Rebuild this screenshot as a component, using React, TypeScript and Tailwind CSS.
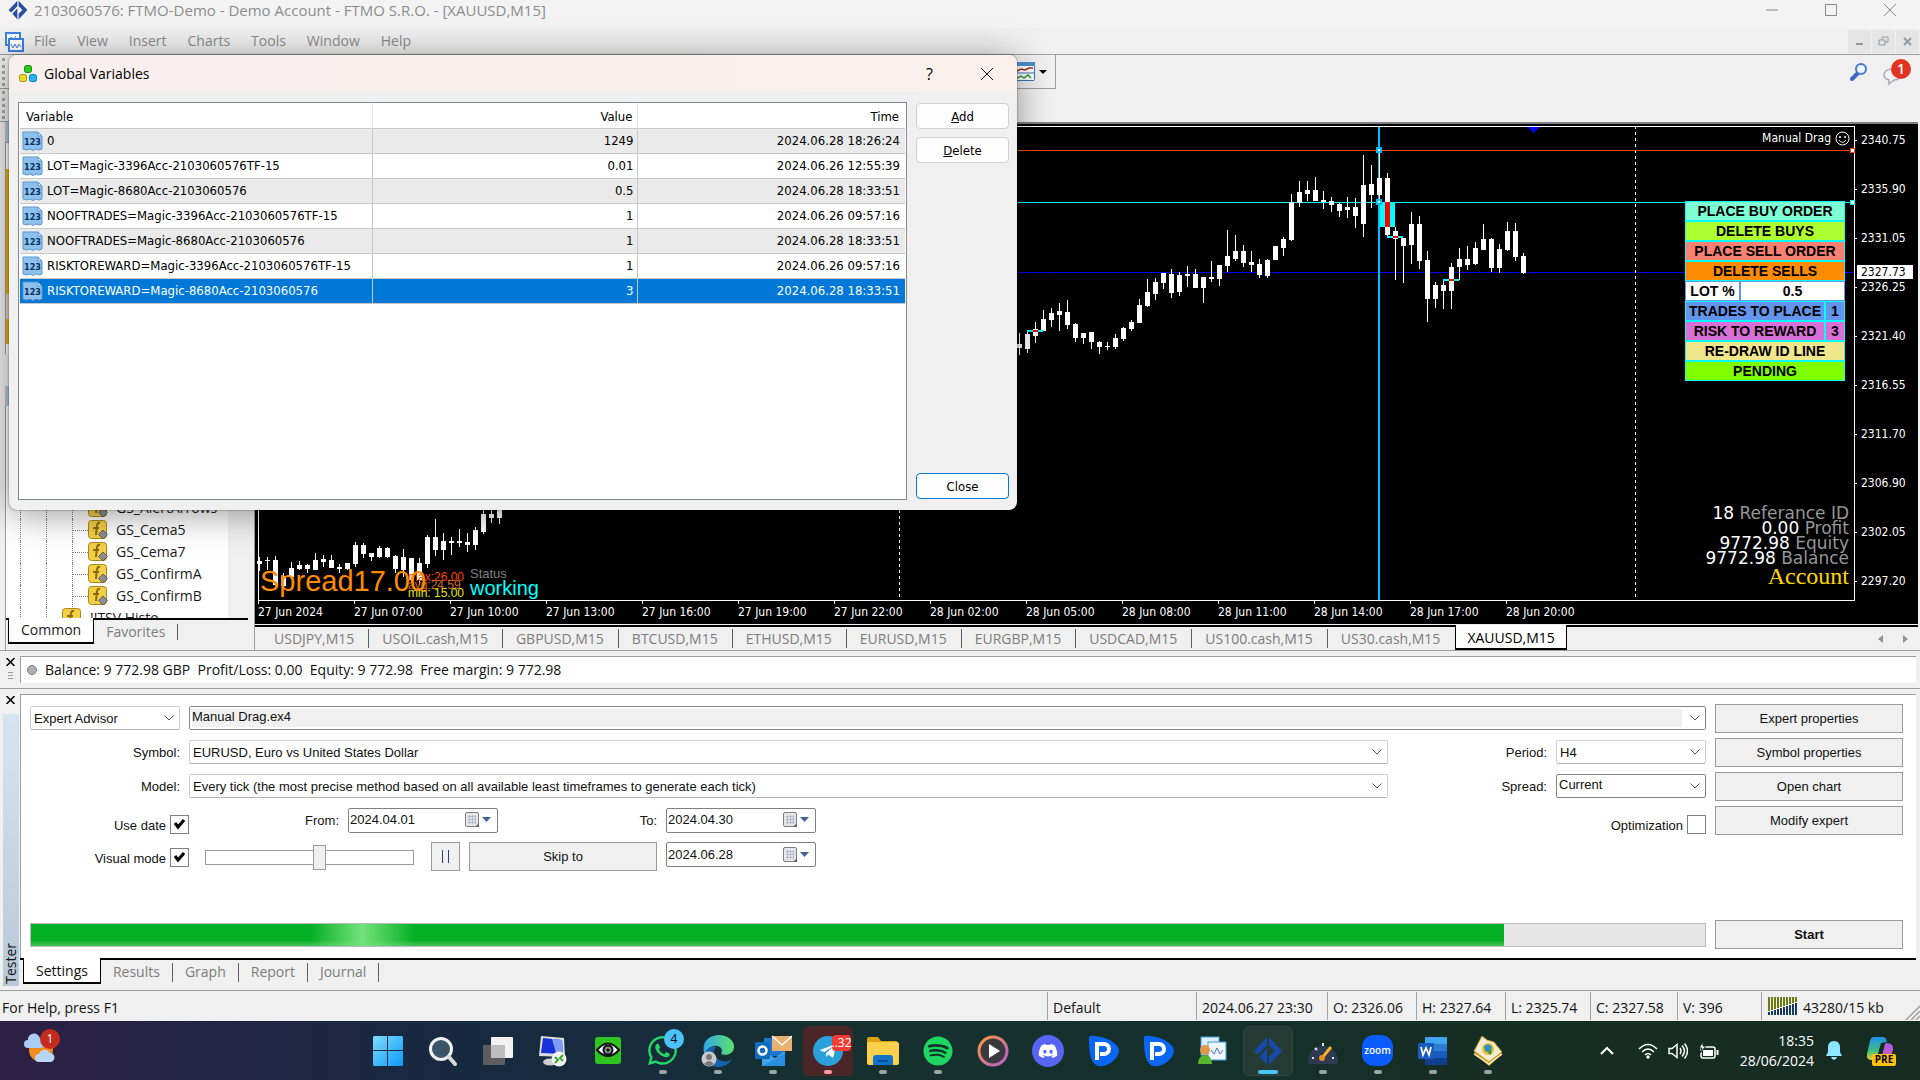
import React from "react";
import { FaWhatsapp, FaSpotify, FaDiscord, FaTelegramPlane } from "react-icons/fa";

const UI = "font-['Open_Sans','Noto_Sans',sans-serif]";
const TAHOMA = "font-['DejaVu_Sans_Condensed','Noto_Sans',sans-serif]";
const ARIAL = "font-['Liberation_Sans',Arial,sans-serif]";

const MENU = ["File", "View", "Insert", "Charts", "Tools", "Window", "Help"];

const VARIABLES = [
  { name: "0", value: "1249", time: "2024.06.28 18:26:24" },
  { name: "LOT=Magic-3396Acc-2103060576TF-15", value: "0.01", time: "2024.06.26 12:55:39" },
  { name: "LOT=Magic-8680Acc-2103060576", value: "0.5", time: "2024.06.28 18:33:51" },
  { name: "NOOFTRADES=Magic-3396Acc-2103060576TF-15", value: "1", time: "2024.06.26 09:57:16" },
  { name: "NOOFTRADES=Magic-8680Acc-2103060576", value: "1", time: "2024.06.28 18:33:51" },
  { name: "RISKTOREWARD=Magic-3396Acc-2103060576TF-15", value: "1", time: "2024.06.26 09:57:16" },
  { name: "RISKTOREWARD=Magic-8680Acc-2103060576", value: "3", time: "2024.06.28 18:33:51", selected: true },
];

const CHART_TABS = [
  "USDJPY,M15", "USOIL.cash,M15", "GBPUSD,M15", "BTCUSD,M15", "ETHUSD,M15", "EURUSD,M15",
  "EURGBP,M15", "USDCAD,M15", "US100.cash,M15", "US30.cash,M15", "XAUUSD,M15",
];

const TIMES = [
  "27 Jun 2024", "27 Jun 07:00", "27 Jun 10:00", "27 Jun 13:00", "27 Jun 16:00", "27 Jun 19:00", "27 Jun 22:00",
  "28 Jun 02:00", "28 Jun 05:00", "28 Jun 08:00", "28 Jun 11:00", "28 Jun 14:00", "28 Jun 17:00", "28 Jun 20:00",
];

const PRICES = [
  "2340.75", "2335.90", "2331.05", "2326.25", "2321.40", "2316.55", "2311.70", "2306.90", "2302.05", "2297.20",
];

// [high, body top, body bottom, low]
type Candle = [number, number, number, number];

const EARLY: Candle[] = [
  [433, 437, 440, 447], [433, 436, 437, 446], [432, 436, 461, 462], [449, 452, 462, 463], [438, 444, 453, 455],
  [437, 441, 445, 446], [440, 441, 445, 449], [429, 436, 446, 446], [431, 435, 438, 443], [431, 436, 444, 444],
  [440, 443, 445, 449], [439, 439, 445, 446], [418, 421, 440, 443], [419, 421, 430, 434], [429, 429, 433, 437],
  [422, 424, 433, 434], [423, 424, 433, 434], [431, 432, 445, 449], [425, 433, 446, 453], [434, 434, 456, 458],
  [434, 439, 456, 461], [411, 413, 440, 444], [395, 413, 426, 432], [409, 417, 426, 436], [413, 417, 419, 431],
  [405, 417, 419, 423], [409, 418, 421, 428], [403, 406, 421, 426], [386, 390, 408, 410], [386, 390, 394, 399],
  [380, 386, 394, 400],
];

const LATE: Candle[] = [
  [209, 220, 224, 231], [207, 210, 225, 229], [198, 205, 212, 219], [186, 195, 207, 207], [184, 189, 196, 203],
  [179, 187, 191, 207], [176, 188, 201, 205], [199, 200, 214, 218], [209, 209, 214, 220], [208, 208, 218, 225],
  [217, 218, 223, 230], [218, 222, 223, 226], [210, 214, 223, 225], [203, 204, 215, 217], [196, 198, 205, 207],
  [175, 181, 199, 199], [155, 168, 182, 183], [154, 158, 170, 176], [149, 149, 159, 165], [145, 150, 169, 174],
  [148, 151, 168, 172], [142, 150, 152, 163], [145, 150, 164, 164], [153, 153, 164, 179], [137, 153, 155, 158],
  [141, 141, 155, 162], [106, 132, 142, 148], [111, 127, 135, 137], [121, 127, 139, 143], [127, 138, 141, 148],
  [135, 140, 151, 154], [135, 136, 152, 154], [122, 122, 136, 136], [113, 115, 124, 132], [70, 78, 116, 117],
  [57, 68, 79, 83], [57, 66, 70, 77], [53, 66, 77, 77], [67, 76, 78, 85], [73, 77, 81, 88],
  [79, 80, 87, 93], [73, 83, 86, 94], [74, 83, 92, 104], [31, 61, 100, 113], [41, 60, 71, 84],
  [26, 54, 71, 79], [49, 54, 111, 112], [103, 107, 115, 156], [114, 114, 122, 159], [88, 100, 121, 140],
  [92, 100, 137, 145], [127, 136, 175, 198], [158, 161, 175, 184], [156, 161, 167, 185], [139, 143, 167, 185],
  [124, 135, 143, 156], [122, 135, 141, 146], [118, 124, 140, 141], [100, 115, 126, 126], [114, 115, 144, 148],
  [120, 125, 144, 149], [98, 107, 126, 127], [99, 107, 133, 137], [129, 132, 149, 150],
];

const QUOTES = ["2024.06.27 23:30", "O: 2326.06", "H: 2327.64", "L: 2325.74", "C: 2327.58", "V: 396"];
const QUOTE_WIDTHS = ["w-[131px]", "w-[89px]", "w-[89px]", "w-[85px]", "w-[87px]", "w-[84px]"];

function Ftmo({ size, color }: { size: number; color: string }) {
  return (
    <svg width={size} height={size} viewBox="0 0 32 32" fill={color}>
      <path d="M15 1v9L5 20l-4-4zM15 13v18l-8-9z" />
      <path d="M17 1l14 15-14 15v-9l6-6-6-6z" />
    </svg>
  );
}

function TitleBar() {
  return (
    <header className="flex h-7 items-center bg-[#f3f3f3] pb-2 pl-2 text-[#8c8c8c]">
      <Ftmo size={20} color="#2b4fa0" />
      <span className="ml-1.5 text-[15px]">2103060576: FTMO-Demo - Demo Account - FTMO S.R.O. - [XAUUSD,M15]</span>
      <div className="ml-auto flex pr-px">
        {["M0 6h12", "M.5.5h11v11H.5z", "M0 0l12 12M12 0L0 12"].map((d, i) => (
          <button key={d} aria-label={["Minimize", "Maximize", "Close"][i]} className="flex w-[59px] items-center justify-center">
            <svg width="12" height="12" fill="none" stroke="#8a8a8a"><path d={d} /></svg>
          </button>
        ))}
      </div>
    </header>
  );
}

function MenuBar() {
  return (
    <nav className="flex h-[27px] items-center border-b border-[#9d9d9d] bg-[#f0f0f0] pl-1 text-sm text-[#8c8c8c]">
      <svg width="21" height="21" viewBox="0 0 21 21" fill="#fff" stroke="#3f7fe0" strokeWidth="2">
        <rect x="2" y="2" width="14" height="12" />
        <path d="M5 8l2-2 2 3 3-4" strokeWidth="1" />
        <rect x="5" y="8" width="14" height="12" />
        <path d="M7 13l2 4 2-4 2 4 2-4 2 3" strokeWidth="1" />
      </svg>
      <div className="ml-[9px] flex gap-[21px]">
        {MENU.map((m) => <button key={m}>{m}</button>)}
      </div>
      <div className="ml-auto flex">
        {["M2 8h7", "M1 4h6v5H1zM4 4V1h6v5H7", "M2 2l7 7M9 2l-7 7"].map((d, i) => (
          <button key={d} aria-label={["Minimize chart", "Restore chart", "Close chart"][i]} className="mr-px flex h-[23px] w-[23px] items-center justify-center bg-[#e5e5e5]">
            <svg width="11" height="11" fill="none" stroke="#8d9bab" strokeWidth={i === 1 ? 1 : 2}><path d={d} /></svg>
          </button>
        ))}
      </div>
    </nav>
  );
}

function Toolbars() {
  return (
    <div className="flex h-[67px] items-start bg-[#f0f0f0]">
      <div className="w-[1056px]">
        <div className="flex h-[34px] items-center gap-1 border-b border-r border-[#9d9d9d] pl-0.5 pr-2">
          <span className="mr-auto h-7 border-l-[3px] border-dotted border-[#a8a8a8]" />
          <svg width="20" height="20" viewBox="0 0 20 20">
            <rect x=".5" y=".5" width="19" height="18" rx="1" fill="#fff" stroke="#3d74b5" />
            <rect width="20" height="4" fill="#4a8fd0" />
            <path d="M2 9l4-2 4 1 4-2h4" stroke="#a03020" fill="none" strokeWidth="1.5" />
            <path d="M1 11h18" stroke="#3d74b5" />
            <path d="M2 16l4-2 3 2 4-3 3 3" stroke="#2e9b3c" fill="none" strokeWidth="1.5" />
          </svg>
          <svg width="8" height="4"><path d="M0 0h8L4 4z" /></svg>
        </div>
        <div className="flex h-[33px] w-60 items-center border-b border-[#9d9d9d] pl-0.5">
          <span className="h-7 border-l-[3px] border-dotted border-[#a8a8a8]" />
        </div>
      </div>
      <div className="ml-auto flex pt-1">
        <button aria-label="Search" className="mr-3.5 self-start pt-1">
          <svg width="18" height="18" viewBox="0 0 18 18" fill="none">
            <path d="M8 10l-6 6" stroke="#3b66c4" strokeWidth="4" strokeLinecap="round" />
            <circle cx="11" cy="6" r="5" stroke="#4a78d0" strokeWidth="2" fill="#eef4ff" />
          </svg>
        </button>
        <button aria-label="1 message" className="mr-2">
          <svg width="30" height="28" viewBox="0 0 30 28">
            <path d="M2 16c0-4 4-6 8-6s8 2 8 6-3 5-6 5l-5 4v-4c-3-1-5-2-5-5z" fill="#f4f4f4" stroke="#a8a8b0" strokeWidth="1.5" />
            <circle cx="19" cy="10" r="10" fill="#e03420" />
            <text x="19" y="15" fill="#fff" fontSize="14" textAnchor="middle" fontWeight="600">1</text>
          </svg>
        </button>
      </div>
    </div>
  );
}

function FxIcon() {
  return (
    <svg width="20" height="20" viewBox="0 0 20 20" className="shrink-0">
      <rect x=".5" y=".5" width="18" height="18" rx="3" fill="#f2cf45" stroke="#a8861c" />
      <path d="M12 3c-4-1-3 4-4 12M5 8h6" stroke="#8a6a10" strokeWidth="2" fill="none" />
      <path d="M15 10l4.5 4.5L15 19l-4.5-4.5z" fill="#8e8e8e" stroke="#5e5e5e" />
    </svg>
  );
}

function LeftDock() {
  return (
    <aside className="flex w-[255px] shrink-0 flex-col border-r border-[#9d9d9d] bg-[#f0f0f0] pl-[5px]">
      <div className="h-5 bg-[#b4c5da]" />
      <div className="h-[212px] border-l border-t border-[#9d9d9d] bg-white pt-[26px]">
        <div className="h-[125px] bg-[#e8b208]" />
        <div className="h-[25px] bg-[#e6cfc0]" />
        <div className="h-[25px] bg-[#e8b208]" />
      </div>
      <div className="h-8" />
      <div className="h-5 bg-[#b4c5da]" />
      <div className="mr-1.5 flex flex-1 flex-col justify-end overflow-hidden border-l border-[#9d9d9d] bg-white text-sm text-[#1a1a1a]">
        <div className="flex">
          <ul className="-mb-[11px] flex-1">
            {["GS_AlertArrows", "GS_Cema5", "GS_Cema7", "GS_ConfirmA", "GS_ConfirmB"].map((n) => (
              <li key={n} className="flex h-[22px] items-center pl-3.5">
                <span className="h-full w-[26px] border-l border-dotted border-[#808080]" />
                <span className="h-full w-[26px] border-l border-dotted border-[#808080]" />
                <span className="relative h-full w-4 border-l border-dotted border-[#808080]">
                  <span className="absolute top-1/2 w-full border-t border-dotted border-[#808080]" />
                </span>
                <FxIcon />
                <span className="ml-2">{n}</span>
              </li>
            ))}
            <li className="flex h-[22px] items-center pl-3.5">
              <span className="h-full w-[26px] border-l border-dotted border-[#808080]" />
              <span className="h-full w-4 border-l border-dotted border-[#808080]" />
              <FxIcon />
              <span className="ml-2">!!TSV Histo</span>
            </li>
          </ul>
          <div className="w-5 bg-[#f0f0f0]" />
        </div>
      </div>
      <div className="mr-1.5 flex h-8 items-start border-l border-[#9d9d9d] text-sm">
        <div className="flex h-[26px] w-full border-t-2 border-black">
          <button className="-mt-0.5 ml-0.5 h-[26px] border-b-2 border-r border-l border-black bg-white px-3 text-[#1a1a1a]">Common</button>
          <button className="px-3 text-[#7c7c7c]">Favorites</button>
          <span className="my-1 w-px bg-[#606060]" />
        </div>
      </div>
    </aside>
  );
}

function Candles({ data, x0 }: { data: Candle[]; x0: number }) {
  return (
    <>
      {data.map(([h, t, b, l], i) => (
        <g key={i} fill="#fff">
          <rect x={x0 + i * 8} y={h} width="1" height={l - h} />
          <rect x={x0 + i * 8 - 2} y={t} width="5" height={b - t} />
        </g>
      ))}
    </>
  );
}

function PlotDrawing() {
  return (
    <svg className="absolute left-0 top-0 h-full w-full" shapeRendering="crispEdges">
      <rect x="0" y="26" width="100%" height="1" fill="#ff4500" />
      <rect x="0" y="78" width="100%" height="1" fill="#00ffff" />
      <rect x="0" y="148" width="100%" height="1" fill="#0000ff" />
      <path d="M644.5 2v474M1380.5 2v474" stroke="#fff" strokeDasharray="3 3" />
      <rect x="1123" y="2" width="2" height="474" fill="#00bfff" />
      <Candles data={EARLY} x0={4} />
      <Candles data={LATE} x0={764} />
      <rect x="1125" y="79" width="15" height="24" fill="#00ffff" />
      <rect x="1130" y="78" width="5" height="25" fill="#ff0000" />
      {[[772, 206], [1132, 112], [1188, 155]].map(([x, y]) => (
        <g key={x}>
          <rect x={x} y={y} width="16" height="2" fill="#00ffff" />
          <rect x={x + 6} y={y} width="5" height="2" fill="#ff0000" />
        </g>
      ))}
      {[[1124, 26], [1124, 78]].map(([x, y]) => (
        <rect key={y} x={x - 2} y={y - 2} width="4" height="4" fill="#fff" stroke="#00bfff" strokeWidth="2" />
      ))}
      <path d="M1272 3h12l-6 6z" fill="#0000ff" />
    </svg>
  );
}

const PANEL = [
  { label: "PLACE BUY ORDER", cls: "bg-[#7fffd4] border-[#00ffff]" },
  { label: "DELETE BUYS", cls: "bg-[#adff2f] border-[#00ffff]" },
  { label: "PLACE SELL ORDER", cls: "bg-[#fa8072] border-[#00ffff]" },
  { label: "DELETE SELLS", cls: "bg-[#ff8c00] border-[#00ffff]" },
  { label: "LOT %", value: "0.5", cls: "bg-white border-[#6495ed]", split: "w-[55px]" },
  { label: "TRADES TO PLACE", value: "1", cls: "bg-[#6495ed] border-[#00ffff]", split: "w-[140px]" },
  { label: "RISK TO REWARD", value: "3", cls: "bg-[#da70d6] border-[#00ffff]", split: "w-[140px]" },
  { label: "RE-DRAW ID LINE", cls: "bg-[#f0e68c] border-[#00ffff]" },
  { label: "PENDING", cls: "bg-[#7fff00] border-[#00ffff]" },
];

function TradePanel() {
  return (
    <div className={`absolute right-2.5 top-[77px] w-40 text-sm font-bold leading-[18px] text-black ${ARIAL}`}>
      {PANEL.map((p) =>
        p.split ? (
          <div key={p.label} className="flex h-5">
            <button className={`${p.split} border whitespace-nowrap ${p.cls}`}>{p.label}</button>
            <button className={`flex-1 border ${p.cls}`}>{p.value}</button>
          </div>
        ) : (
          <button key={p.label} className={`block h-5 w-full border ${p.cls}`}>{p.label}</button>
        )
      )}
    </div>
  );
}

function Chart() {
  return (
    <div className={`flex h-[500px] flex-col bg-black text-xs text-white ${TAHOMA}`}>
      <div className="flex h-[477px]">
        <div className="relative flex-1 overflow-hidden">
          <PlotDrawing />
          <div className="absolute bottom-0 left-[3px] right-0 top-0.5 border border-white" />
          <div className="absolute right-[5px] top-1.5 flex items-center gap-1">
            <span>Manual Drag</span>
            <svg width="15" height="15" viewBox="0 0 15 15" fill="none" stroke="#fff">
              <circle cx="7.5" cy="7.5" r="6.5" />
              <circle cx="5" cy="6" r=".7" />
              <circle cx="10" cy="6" r=".7" />
              <path d="M4 9c2 3 5 3 7 0" />
            </svg>
          </div>
          <span className="absolute right-0 top-6 size-[5px] border border-[#ff4500] bg-white" />
          <span className="absolute right-0 top-[76px] size-[5px] border border-[#00ffff] bg-white" />
          <TradePanel />
          <div className="absolute bottom-[15px] right-1.5 text-right font-['DejaVu_Sans',sans-serif] text-[17px] leading-[15px] text-[#969696]">
            <p><span className="text-white">18</span> Referance ID</p>
            <p><span className="text-white">0.00</span> Profit</p>
            <p><span className="text-white">9772.98</span> Equity</p>
            <p><span className="text-white">9772.98</span> Balance</p>
            <p className="font-['Liberation_Serif',serif] text-2xl leading-5 text-[#ffd700]">Account</p>
          </div>
          <div className={`absolute bottom-1 left-[153px] text-xs leading-2 ${ARIAL}`}>
            <p className="text-[#ff4500]">max:26.00</p>
            <p className="text-[#d2691e]">avg:24.59</p>
            <p className="text-[#e6e600]">min: 15.00</p>
          </div>
          <div className={`absolute bottom-[3px] left-[215px] ${ARIAL}`}>
            <p className="text-[13px] leading-2 text-[#808080]">Status</p>
            <p className="text-xl leading-5 text-[#00ffff]">working</p>
          </div>
          <div className={`absolute bottom-1.5 left-[5px] text-[29px] leading-7 text-[#ff8c00] ${ARIAL}`}>Spread17.00</div>
        </div>
        <div className="relative flex w-[63px] flex-col gap-[33px] pt-2">
          {PRICES.map((p) => (
            <div key={p} className="flex h-4 items-center gap-1">
              <span className="h-px w-0.5 bg-white" />
              {p}
            </div>
          ))}
          <div className="absolute left-0.5 top-[141px] h-[14px] w-14 bg-white pl-1 leading-[14px] text-black">2327.73</div>
        </div>
      </div>
      <div className="flex h-[23px] overflow-hidden pl-[3px]">
        {TIMES.map((t) => (
          <div key={t} className="relative w-24 shrink-0 pt-[3px] whitespace-nowrap">
            <span className="absolute left-0 top-0 h-[3px] w-px bg-white" />
            {t}
          </div>
        ))}
      </div>
    </div>
  );
}

function ChartTabs() {
  return (
    <div className="mt-px flex h-[25px] border-t-2 border-black bg-[#f0f0f0] pl-1.5 text-sm text-[#7c7c7c]">
      {CHART_TABS.map((t, i) =>
        i === CHART_TABS.length - 1 ? (
          <button key={t} className="-mt-0.5 border-b-2 border-l border-r border-black bg-white px-[11px] pt-0.5 text-black">{t}</button>
        ) : (
          <button key={t} className="flex items-center pl-[13px]">
            {t}
            <span className={`ml-3.5 h-[19px] w-px ${i === 9 ? "bg-transparent" : "bg-[#606060]"}`} />
          </button>
        )
      )}
      <div className="ml-auto flex items-center gap-5 pr-2.5">
        <svg width="5" height="8" fill="#909090"><path d="M5 0v8L0 4z" /></svg>
        <svg width="5" height="8" fill="#909090"><path d="M0 0v8l5-4z" /></svg>
      </div>
    </div>
  );
}

function CloseX() {
  return (
    <button aria-label="Close panel" className="block">
      <svg width="9" height="8" stroke="#000" strokeWidth="1.5"><path d="M.5 0l8 8M8.5 0l-8 8" /></svg>
    </button>
  );
}

function Terminal() {
  return (
    <section className="flex h-[38px] border-b border-[#9d9d9d] pt-[5px]">
      <div className="flex w-5 flex-col items-center gap-1.5 pt-0.5">
        <CloseX />
        <svg width="5" height="9" stroke="#9a9a9a"><path d="M0 .5h5M0 3.5h5M0 6.5h5" /></svg>
      </div>
      <div className="mr-1 flex h-[27px] flex-1 items-center border-l border-t border-[#9d9d9d] bg-white pl-1.5 text-sm text-[#111]">
        <svg width="10" height="10"><circle cx="5" cy="5" r="4.5" fill="#b0b0b0" stroke="#808080" /></svg>
        <span className="ml-2 whitespace-pre">Balance: 9 772.98 GBP  Profit/Loss: 0.00  Equity: 9 772.98  Free margin: 9 772.98</span>
      </div>
    </section>
  );
}

type ComboProps = { id: string; value: string; className: string; label?: string; strong?: boolean; filled?: boolean };

function Combo({ id, value, className, label, strong, filled }: ComboProps) {
  return (
    <div className={`relative h-6 border bg-white ${className} ${strong ? "rounded-xs border-[#868686]" : "rounded-xs border-[#d0d0d0] border-b-[#b5b5b5] bg-[#fdfdfd]"}`}>
      <select
        id={id}
        aria-label={label}
        defaultValue={value}
        className={`block h-full w-full appearance-none leading-4 outline-none ${filled ? "border-2 border-r-[23px] border-white bg-[#f0f0f0] pb-0.5" : strong ? "pb-0.5 pl-0.5" : "pl-[3px] pt-px"}`}
      >
        <option>{value}</option>
      </select>
      <svg className="pointer-events-none absolute right-[5px] top-2" width="10" height="6" fill="none" stroke="#505050"><path d="M.5.5L5 5l4.5-4.5" /></svg>
    </div>
  );
}

function DateBox({ id, value, label }: { id: string; value: string; label?: string }) {
  return (
    <div className="flex h-[25px] w-[150px] items-center rounded-xs border border-[#808080] bg-white pr-1.5">
      <input id={id} aria-label={label} defaultValue={value} className="w-0 flex-1 pl-px outline-none" />
      <button aria-label="Open calendar" className="flex items-center gap-0.5">
        <svg width="15" height="16" viewBox="0 0 15 16">
          <rect x=".5" y=".5" width="13" height="14" rx="1.5" fill="#e6e6ea" stroke="#857d7d" />
          <path d="M3 4.5h8M3 7.5h8M3 10.5h8M4.5 3v9M7.5 3v9M10.5 3v9" stroke="#b3bccb" />
          <path d="M10 15l4-4v4z" fill="#6b6464" />
        </svg>
        <svg width="9" height="6" fill="#44639a"><path d="M0 0h9L4.5 5z" /></svg>
      </button>
    </div>
  );
}

function Check({ id, label, on }: { id: string; label: string; on?: boolean }) {
  return (
    <div className="flex items-center gap-1 pt-1">
      <label htmlFor={id} className="pt-[3px]">{label}</label>
      <div className="relative size-[19px]">
        <input id={id} type="checkbox" defaultChecked={on} className="peer block size-[19px] appearance-none border border-[#808080] bg-white" />
        <svg className="pointer-events-none absolute left-1 top-1 hidden peer-checked:block" width="11" height="11" fill="none" stroke="#000" strokeWidth="3"><path d="M1 4l3 4 6-7" /></svg>
      </div>
    </div>
  );
}

const BTN = "h-[29px] border border-[#9a9a9a] bg-[#f0f0f0]";

function Tester() {
  return (
    <section className="flex flex-1 bg-[#f0f0f0] pt-[5px]">
      <div className="flex w-5 flex-col items-center">
        <div className="pb-2 pt-0.5"><CloseX /></div>
        <div className="mb-1 ml-[3px] mt-0.5 flex w-4 flex-1 items-end self-start bg-gradient-to-b from-[#d6e4f3] to-[#b9c7d8] pb-0.5">
          <span className="rotate-180 text-sm leading-4 text-[#111] [writing-mode:vertical-rl]">Tester</span>
        </div>
      </div>
      <div className="mr-1 flex flex-1 flex-col">
        <div className={`flex flex-1 flex-col border-l border-t border-[#9d9d9d] bg-white pb-[9px] pl-[9px] pr-[13px] pt-1.5 text-[13px] text-[#111] ${ARIAL}`}>
          <div className="flex gap-[9px]">
            <div className="flex-1 *:h-[34px]">
              <div className="flex items-center gap-[9px]">
                <Combo id="kind" label="Program type" value="Expert Advisor" className="w-[150px]" />
                <Combo id="expert" label="Expert" value="Manual Drag.ex4" className="flex-1" strong filled />
              </div>
              <div className="flex items-center gap-[9px]">
                <label htmlFor="symbol" className="w-[150px] pt-0.5 text-right">Symbol:</label>
                <Combo id="symbol" value="EURUSD, Euro vs United States Dollar" className="flex-1" />
                <label htmlFor="period" className="w-[150px] pt-0.5 text-right">Period:</label>
                <Combo id="period" value="H4" className="w-[150px]" />
              </div>
              <div className="flex items-center gap-[9px]">
                <label htmlFor="model" className="w-[150px] pt-0.5 text-right">Model:</label>
                <Combo id="model" value="Every tick (the most precise method based on all available least timeframes to generate each tick)" className="flex-1" />
                <label htmlFor="spread" className="w-[150px] pt-0.5 text-right">Spread:</label>
                <Combo id="spread" value="Current" className="w-[150px]" strong />
              </div>
              <div className="flex items-center">
                <div className="flex w-[159px] justify-end pt-1"><Check id="usedate" label="Use date" on /></div>
                <label htmlFor="from" className="mr-[9px] w-[150px] pt-0.5 text-right">From:</label>
                <DateBox id="from" value="2024.04.01" />
                <label htmlFor="to" className="mr-[9px] w-[159px] pt-0.5 text-right">To:</label>
                <DateBox id="to" value="2024.04.30" />
                <div className="ml-auto pt-1"><Check id="optimization" label="Optimization" /></div>
              </div>
              <div className="flex items-start pt-[5px]">
                <div className="flex w-[159px] justify-end"><Check id="visual" label="Visual mode" on /></div>
                <input
                  type="range"
                  aria-label="Visual speed"
                  defaultValue={55}
                  className="ml-4 mr-[17px] mt-2 h-[15px] w-[209px] appearance-none border border-[#9a9a9a] bg-white [&::-webkit-slider-thumb]:h-[25px] [&::-webkit-slider-thumb]:w-[13px] [&::-webkit-slider-thumb]:appearance-none [&::-webkit-slider-thumb]:border [&::-webkit-slider-thumb]:border-[#9a9a9a] [&::-webkit-slider-thumb]:bg-[#f0f0f0]"
                />
                <button aria-label="Pause" className={`${BTN} mr-[9px] flex w-[29px] items-center justify-center`}>
                  <svg width="9" height="13" stroke="#2d3a8c"><path d="M1.5 0v13M7.5 0v13" /></svg>
                </button>
                <button className={`${BTN} mr-[9px] w-[188px]`}>Skip to</button>
                <DateBox id="skip" label="Skip to date" value="2024.06.28" />
              </div>
            </div>
            <div className="flex w-[188px] flex-col gap-[5px] pt-[3px]">
              {["Expert properties", "Symbol properties", "Open chart", "Modify expert"].map((b) => (
                <button key={b} className={BTN}>{b}</button>
              ))}
            </div>
          </div>
          <div className="mt-auto flex items-center gap-[9px]">
            <div className="h-6 flex-1 border border-[#bcbcbc] bg-[#e6e6e6]">
              <div className="flex h-full w-[88%] items-stretch bg-gradient-to-b from-[#06b025] from-75% to-[#3cc455]">
                <div className="ml-[19%] w-[7%] bg-gradient-to-r from-transparent via-[#74e27c] to-transparent" />
              </div>
            </div>
            <button className={`${BTN} w-[188px] font-bold`}>Start</button>
          </div>
        </div>
        <div className="mb-1.5 flex h-[26px] border-t-2 border-black text-sm text-[#7c7c7c]">
          <button className="-mt-0.5 ml-[3px] border-b-2 border-l border-r border-black bg-white px-3 pt-0.5 text-[#111]">Settings</button>
          {["Results", "Graph", "Report", "Journal"].map((t) => (
            <button key={t} className="flex items-center pl-3">
              {t}
              <span className="ml-3 h-[19px] w-px bg-[#606060]" />
            </button>
          ))}
        </div>
      </div>
    </section>
  );
}

function StatusBar() {
  return (
    <footer className="flex h-[31px] items-center border-t border-[#9d9d9d] bg-[#f0f0f0] text-sm text-[#111] *:h-7 *:pt-[3px]">
      <div className="flex flex-1 items-center pl-0.5">For Help, press F1</div>
      <div className="flex w-[149px] items-center border-l border-[#a0a0a0] pl-[5px]">Default</div>
      {QUOTES.map((q, i) => (
        <div key={q} className={`${QUOTE_WIDTHS[i]} flex items-center border-l border-[#a0a0a0] pl-[5px]`}>{q}</div>
      ))}
      <div className="flex w-[159px] items-center gap-1 border-l border-[#a0a0a0] pl-[5px]">
        <svg width="32" height="22">
          {Array.from({ length: 10 }, (_, i) => (
            <g key={i}>
              <rect x={i * 3 + 1} y="0" width="2" height={14 - i} fill="#6b7a12" />
              <rect x={i * 3 + 1} y={15 - i} width="2" height={3 + i} fill="#173a5e" />
            </g>
          ))}
        </svg>
        <span>43280/15 kb</span>
        <svg width="15" height="15" className="ml-auto self-end" stroke="#a0a0a0" strokeWidth="1.5"><path d="M1 15L15 1M6 15l9-9M11 15l4-4" /></svg>
      </div>
    </footer>
  );
}

function Bubble({ text, cls }: { text: string; cls: string }) {
  return <span className={`absolute flex items-center justify-center text-xs ${cls}`}>{text}</span>;
}

const PuP = (
  <svg width="32" height="32" viewBox="0 0 32 32">
    <path d="M2 4C1 1 4 0 8 1c8 1 16 3 22 10 3 4 2 8-1 12-5 6-12 9-17 8C4 30 2 18 2 4z" fill="#0a66f5" />
    <path d="M10 25V9h7a5 5 0 010 10h-4" fill="none" stroke="#fff" strokeWidth="4" />
  </svg>
);

const APPS: { name: string; icon: React.ReactNode; dot?: string; box?: string }[] = [
  {
    name: "Start",
    icon: (
      <svg width="30" height="30" viewBox="0 0 30 30">
        <defs><linearGradient id="win" x1="0" y1="0" x2="1" y2="1"><stop stopColor="#7fdcff" /><stop offset="1" stopColor="#0a9bfa" /></linearGradient></defs>
        <path d="M1 0h13v14H0V1zM15 0h14l1 1v13H15zM0 15h14v15H1l-1-1zM15 15h15v14l-1 1H15z" fill="url(#win)" />
      </svg>
    ),
  },
  {
    name: "Search",
    icon: (
      <svg width="28" height="30" viewBox="0 0 28 30">
        <circle cx="12" cy="13" r="10.5" fill="#3c5566" stroke="#f0f0f0" strokeWidth="3" />
        <path d="M20 21l6 7" stroke="#d8d8d8" strokeWidth="4" strokeLinecap="round" />
      </svg>
    ),
  },
  {
    name: "Task view",
    icon: (
      <svg width="30" height="30" viewBox="0 0 30 30">
        <rect x="8" y="1" width="22" height="21" rx="1" fill="#f2f2f2" />
        <rect x="0" y="9" width="22" height="20" rx="1" fill="#5e5e5e" />
        <rect x="8" y="9" width="14" height="13" fill="#bdbdbd" />
      </svg>
    ),
  },
  {
    name: "Remote Desktop",
    icon: (
      <svg width="30" height="32" viewBox="0 0 30 32">
        <path d="M3 1l23 2 1 19L1 21z" fill="#dcdcdc" />
        <path d="M5 3l19 2 1 14L3 18z" fill="#1733d8" />
        <path d="M14 4l10 1 1 14-7-1z" fill="#7f9cf5" />
        <ellipse cx="12" cy="27" rx="7" ry="3.5" fill="#d0d0d0" />
        <circle cx="21" cy="24" r="7.5" fill="#f2f2f2" />
        <path d="M17 22l3 3-3 3M25 20l-3 3 3 3" stroke="#3aa828" strokeWidth="2" fill="none" />
      </svg>
    ),
  },
  {
    name: "Eye",
    icon: (
      <svg width="26" height="28" viewBox="0 0 26 28">
        <rect width="26" height="27" rx="3" fill="#2fc41f" />
        <path d="M2 13q11-13 22 0-11 12-22 0z" fill="#fff" stroke="#111" strokeWidth="2" />
        <circle cx="13" cy="13" r="4.5" fill="#888" stroke="#111" strokeWidth="2" />
        <circle cx="13" cy="13" r="1.5" />
      </svg>
    ),
  },
  {
    name: "WhatsApp",
    dot: "w-2 bg-[#9aa5a5]",
    icon: (
      <>
        <FaWhatsapp size={33} color="#25d366" />
        <Bubble text="4" cls="right-1.5 top-2 size-5 rounded-full bg-[#4cc2ff] text-black text-sm" />
      </>
    ),
  },
  {
    name: "Edge",
    dot: "w-2 bg-[#9aa5a5]",
    icon: (
      <svg width="34" height="32" viewBox="0 0 34 32">
        <defs><linearGradient id="edge"><stop stopColor="#2ea8e8" /><stop offset="1" stopColor="#5fe06a" /></linearGradient></defs>
        <path d="M4 20C-1 8 8 0 18 0c9 0 16 6 15 13-1 6-7 8-13 6 3-4-1-9-7-8-5 1-8 5-9 9z" fill="url(#edge)" />
        <path d="M4 20c1-7 6-10 11-8-4 4-2 12 6 14 4 1 8 0 10-2-3 6-9 8-14 8C9 32 4 26 4 20z" fill="#1562ab" />
        <circle cx="8" cy="24" r="7.5" fill="#c9c9c9" />
        <circle cx="8" cy="22" r="3" fill="#777" />
        <path d="M3 29q5-6 10 0-5 4-10 0z" fill="#777" />
      </svg>
    ),
  },
  {
    name: "Outlook",
    dot: "w-2 bg-[#9aa5a5]",
    icon: (
      <svg width="38" height="32" viewBox="0 0 38 32">
        <path d="M10 3h20v18H10z" fill="#1a76d2" />
        <path d="M8 15l13 8 10-7v15H8z" fill="#41a5ee" />
        <path d="M8 31l23-13v13z" fill="#2b8fe0" />
        <rect x="1" y="7" width="15" height="17" rx="1" fill="#0f6cbd" />
        <circle cx="8.5" cy="15.5" r="4" fill="none" stroke="#fff" strokeWidth="2.5" />
        <rect x="18" y="1" width="20" height="15" fill="#e9b072" />
        <path d="M18 1l10 9L38 1" stroke="#fff" strokeWidth="1.5" fill="none" />
      </svg>
    ),
  },
  {
    name: "Telegram",
    dot: "w-2 bg-[#ff99a4]",
    box: "bg-[#4a2629]",
    icon: (
      <>
        <span className="flex size-[30px] items-center justify-center rounded-full bg-[#2aa1da]"><FaTelegramPlane size={18} color="#fff" /></span>
        <Bubble text="..32" cls="right-1 top-3.5 h-4 w-[19px] rounded bg-[#f23c34] text-white" />
      </>
    ),
  },
  {
    name: "File Explorer",
    dot: "w-2 bg-[#9aa5a5]",
    icon: (
      <svg width="32" height="30" viewBox="0 0 32 30">
        <path d="M0 3q0-2 2-2h9l3 4h16v8H0z" fill="#e0a20c" />
        <rect y="6" width="32" height="23" rx="2" fill="#ffd04c" />
        <path d="M6 29v-7q0-3 3-3h14q3 0 3 3v7z" fill="#1173c9" />
        <path d="M11 25h10" stroke="#0a4b8c" strokeWidth="2" />
      </svg>
    ),
  },
  { name: "Spotify", dot: "w-2 bg-[#9aa5a5]", icon: <FaSpotify size={30} color="#1ed760" /> },
  {
    name: "Media Player",
    icon: (
      <svg width="32" height="32" viewBox="0 0 32 32">
        <defs><linearGradient id="mp" x1="0" y1="0" x2="1" y2="1"><stop stopColor="#ff9a3c" /><stop offset="1" stopColor="#b35ad0" /></linearGradient></defs>
        <circle cx="16" cy="16" r="14" fill="#3a3a3e" stroke="url(#mp)" strokeWidth="3" />
        <path d="M12 9l11 7-11 7z" fill="#fff" />
      </svg>
    ),
  },
  { name: "Discord", icon: <span className="flex size-8 items-center justify-center rounded-full bg-[#5865f2]"><FaDiscord size={20} color="#fff" /></span> },
  { name: "Prop app", icon: PuP },
  { name: "Prop app 2", icon: PuP },
  {
    name: "Contacts",
    icon: (
      <svg width="30" height="30" viewBox="0 0 30 30">
        <rect x="3" y="1" width="18" height="18" fill="#dceefc" stroke="#3aa0d8" />
        <rect x="10" y="6" width="18" height="18" fill="#eef6fd" stroke="#3aa0d8" />
        <path d="M13 14l3 4 3-6 3 6 3-4" stroke="#4a78b8" fill="none" />
        <circle cx="7" cy="14" r="5" fill="#e09a4a" />
        <path d="M0 28c0-12 14-12 14 0z" fill="#58b52c" />
      </svg>
    ),
  },
  { name: "FTMO MetaTrader", dot: "w-5 bg-[#4cc2ff]", box: "bg-[#263b33] border border-[#30453d]", icon: <Ftmo size={30} color="#1848a8" /> },
  {
    name: "Speed test",
    dot: "w-2 bg-[#9aa5a5]",
    icon: (
      <svg width="32" height="28" viewBox="0 0 32 28">
        <path d="M1 24a15 15 0 1130 0q0 3-3 3H4q-3 0-3-3z" fill="#2d3a52" />
        <path d="M5 21h2M8 11l2 2M16 6v3M25 21h2" stroke="#dfe6ee" strokeWidth="2" />
        <path d="M15 21l9-11" stroke="#f5b32a" strokeWidth="3" />
        <circle cx="15" cy="21" r="3" fill="#f08c1e" />
      </svg>
    ),
  },
  {
    name: "Zoom",
    dot: "w-2 bg-[#9aa5a5]",
    icon: <span className="flex size-[31px] items-center justify-center rounded-xl bg-[#0b5cff] text-[10px] font-semibold text-white">zoom</span>,
  },
  {
    name: "Word",
    dot: "w-2 bg-[#9aa5a5]",
    icon: (
      <svg width="30" height="30" viewBox="0 0 30 30">
        <path d="M7 1h22v8H7z" fill="#41a5ee" />
        <path d="M7 8h22v8H7z" fill="#2b7cd3" />
        <path d="M7 15h22v7H7z" fill="#185abd" />
        <path d="M7 22h22v7H7z" fill="#103f91" />
        <rect y="7" width="16" height="16" rx="1" fill="#185abd" />
        <path d="M3 11l2 8 3-7 3 7 2-8" stroke="#fff" strokeWidth="1.8" fill="none" />
      </svg>
    ),
  },
  {
    name: "MetaEditor",
    dot: "w-2 bg-[#9aa5a5]",
    icon: (
      <svg width="30" height="30" viewBox="0 0 30 30">
        <path d="M1 17L12 3l17 14-13 13z" fill="#d8a41c" />
        <path d="M1 15L9 0l5 4 7 2 8 10-13 10z" fill="#f4ecd0" stroke="#b8902c" />
        <path d="M1 18l15 10 13-10" stroke="#fff3c0" strokeWidth="1.5" fill="none" />
        <circle cx="15" cy="13" r="6" fill="#e8c22e" />
        <path d="M11 10q5-4 8 1l-3 6-4-2z" fill="#2f8fc0" />
        <path d="M15 17l4-5-1 7z" fill="#3a9b3c" />
      </svg>
    ),
  },
];

function Taskbar() {
  return (
    <div className="flex h-[59px] items-stretch bg-[linear-gradient(90deg,#2d1f45_0%,#1f2542_14%,#17293f_24%,#162c3c_34%,#15302f_42%,#15302b_65%,#162d22_80%,#162c22_100%)] text-white">
      <div className="w-[360px] shrink-0">
        <button aria-label="Weather" className="relative ml-6 mt-2">
          <svg width="34" height="36" viewBox="0 0 34 36">
            <circle cx="17" cy="21" r="12" fill="#f28a1e" />
            <path d="M4 19a4 4 0 010-8 6 6 0 0112-1 4.5 4.5 0 010 9z" fill="#a8cdf5" />
            <path d="M15 33a4 4 0 010-8 6 6 0 0111-1 4.5 4.5 0 010 9z" fill="#b9d6f7" />
          </svg>
          <Bubble text="1" cls="-right-0.5 top-0 size-5 rounded-full bg-[#c42b1c] text-sm" />
        </button>
      </div>
      {APPS.map((a) => (
        <button key={a.name} aria-label={a.name} className="relative flex w-[55px] shrink-0 items-center justify-center">
          <span className={`flex h-[50px] w-[50px] items-center justify-center rounded-md ${a.box ?? ""}`}>{a.icon}</span>
          {a.dot && <span className={`absolute bottom-1.5 h-1 rounded-full ${a.dot}`} />}
        </button>
      ))}
      <div className="ml-auto flex items-center">
        <svg width="14" height="9" fill="none" stroke="#fff" strokeWidth="2" className="mr-6"><path d="M1 8l6-6 6 6" /></svg>
        <svg width="20" height="16" viewBox="0 0 20 16" fill="none" stroke="#fff" strokeWidth="1.5" className="mr-2.5">
          <path d="M1 6q9-9 18 0M4 9q6-6 12 0M7 12q3-3 6 0" /><circle cx="10" cy="14" r="1" fill="#fff" />
        </svg>
        <svg width="20" height="18" viewBox="0 0 20 18" fill="none" stroke="#fff" strokeWidth="1.5" className="mr-2.5">
          <path d="M1 6.5h3l5-4v13l-5-4H1zM12 6q2 3 0 6M14 3.5q5 5.5 0 11M16.5 1.5q6 7.5 0 15" />
        </svg>
        <svg width="21" height="18" viewBox="0 0 21 18" className="mr-[21px]">
          <rect x="3" y="5" width="14" height="11" rx="2" fill="#162c22" stroke="#fff" strokeWidth="1.5" />
          <rect x="5" y="8" width="10" height="6" fill="#fff" />
          <rect x="18.5" y="8" width="2" height="5" fill="#fff" />
          <path d="M5 0L1 6h3L2 11l6-7H5z" fill="#fff" stroke="#162c22" />
        </svg>
        <div className="text-right text-sm leading-5">
          <p>18:35</p>
          <p>28/06/2024</p>
        </div>
        <svg width="16" height="20" viewBox="0 0 16 20" fill="#8fe6ff" className="ml-3 mr-6">
          <path d="M8 0c4 0 6 3 6 6v5l2 4H0l2-4V6c0-3 2-6 6-6zM5 16h6q-1 3-3 3t-3-3z" />
        </svg>
        <div className="relative mr-[26px]">
          <svg width="28" height="30" viewBox="0 0 28 30">
            <defs>
              <linearGradient id="cp1" x1="0" y1="0" x2="0" y2="1"><stop stopColor="#1f8df0" /><stop offset=".6" stopColor="#3fc080" /><stop offset="1" stopColor="#e8d030" /></linearGradient>
              <linearGradient id="cp2" x1="0" y1="0" x2="0" y2="1"><stop stopColor="#a05af0" /><stop offset="1" stopColor="#f0609a" /></linearGradient>
            </defs>
            <path d="M8 1h9q3 0 4 5l-6 1-4 14q-1 3-5 3-6 0-5-6L4 5q1-4 4-4z" fill="url(#cp1)" />
            <path d="M20 7q8 0 7 7l-3 9q-2 6-9 6h-4q3-1 4-6l3-11q1-5 2-5z" fill="url(#cp2)" />
          </svg>
          <Bubble text="PRE" cls="bottom-0 left-1.5 h-3 w-6 rounded-xs bg-[#ffc20e] text-black font-bold text-[10px]" />
        </div>
      </div>
    </div>
  );
}

function VarIcon() {
  return (
    <svg width="21" height="20" viewBox="0 0 21 20">
      <path d="M1 1h15l4 4v13l-3 1-3-1-3 1.5-3-1.5-3 1-4-1z" fill="#8cc1ee" stroke="#5b97cc" />
      <path d="M16 1v4h4z" fill="#d4e9fa" stroke="#5b97cc" />
      <text x="10.5" y="14" fontSize="9" fontWeight="700" textAnchor="middle" fill="#0d2f5c">123</text>
    </svg>
  );
}

function GlobalVariables() {
  const btn = "h-[26px] rounded-sm border bg-[#fdfdfd] pt-0.5";
  return (
    <div role="dialog" aria-label="Global Variables" className={`absolute left-[9px] top-[55px] flex h-[455px] w-[1008px] flex-col overflow-hidden rounded-lg bg-[#f0f0f0] shadow-[0_4px_36px_rgba(0,0,0,0.4),0_0_2px_rgba(0,0,0,0.6)] text-[13px] text-black ${TAHOMA}`}>
      <div className={`flex h-[37px] shrink-0 items-center bg-gradient-to-r from-[#f9efef] to-[#faf1ec] pl-2.5 text-sm ${UI}`}>
        <svg width="18" height="17" viewBox="0 0 18 17">
          <rect x="5.5" y=".5" width="7" height="7" rx="2" fill="#2fc81e" stroke="#168a10" />
          <rect x=".5" y="9.5" width="7" height="7" rx="2" fill="#ecdc1c" stroke="#a39410" />
          <rect x="10.5" y="9.5" width="7" height="7" rx="2" fill="#22b4ee" stroke="#0e7cab" />
        </svg>
        <span className="ml-[7px]">Global Variables</span>
        <button aria-label="Help" className="ml-auto text-base">?</button>
        <button aria-label="Close dialog" className="ml-12 mr-6">
          <svg width="12" height="12" stroke="#111"><path d="M0 0l12 12M12 0L0 12" /></svg>
        </button>
      </div>
      <div className="flex flex-1 gap-[9px] pb-2.5 pl-[9px] pr-2 pt-2.5">
        <div className="flex-1 border border-[#828790] bg-white px-px">
          <table className="w-full table-fixed border-collapse">
            <thead>
              <tr className="h-[25px] border-b border-[#c8c8c8]">
                <th className="w-[352px] border-r border-[#e5e5e5] pl-1.5 pt-[3px] text-left font-normal">Variable</th>
                <th className="w-[265px] border-r border-[#e5e5e5] pr-1 pt-[3px] text-right font-normal">Value</th>
                <th className="pr-1.5 pt-[3px] text-right font-normal">Time</th>
              </tr>
            </thead>
            <tbody>
              {VARIABLES.map((v, i) => (
                <tr
                  key={v.name}
                  className={`h-[25px] border-b border-[#c8c8c8] ${v.selected ? "bg-[#0078d7] text-white" : i % 2 === 0 ? "bg-[#eaeaea]" : "bg-white"}`}
                >
                  <td className="border-r border-[#c8c8c8] p-0">
                    <div className="flex items-center gap-1 pl-0.5"><VarIcon />{v.name}</div>
                  </td>
                  <td className="border-r border-[#c8c8c8] p-0 pr-[3px] text-right">{v.value}</td>
                  <td className="p-0 pr-[5px] text-right">{v.time}</td>
                </tr>
              ))}
            </tbody>
          </table>
        </div>
        <div className="flex w-[93px] flex-col gap-2 py-px">
          <button className={`${btn} border-[#d0d0d0]`}><u>A</u>dd</button>
          <button className={`${btn} border-[#d0d0d0]`}><u>D</u>elete</button>
          <button className={`${btn} mt-auto border-[#0078d4]`}>Close</button>
        </div>
      </div>
    </div>
  );
}

export default function App() {
  return (
    <div className={`relative flex min-h-screen w-full flex-col overflow-hidden bg-[#f0f0f0] ${UI}`}>
      <TitleBar />
      <MenuBar />
      <Toolbars />
      <main className="flex border-b border-[#9d9d9d]">
        <LeftDock />
        <div className="mr-0.5 min-w-0 flex-1 border-t-2 border-[#808080]">
          <Chart />
          <ChartTabs />
        </div>
      </main>
      <Terminal />
      <Tester />
      <StatusBar />
      <Taskbar />
      <GlobalVariables />
    </div>
  );
}
